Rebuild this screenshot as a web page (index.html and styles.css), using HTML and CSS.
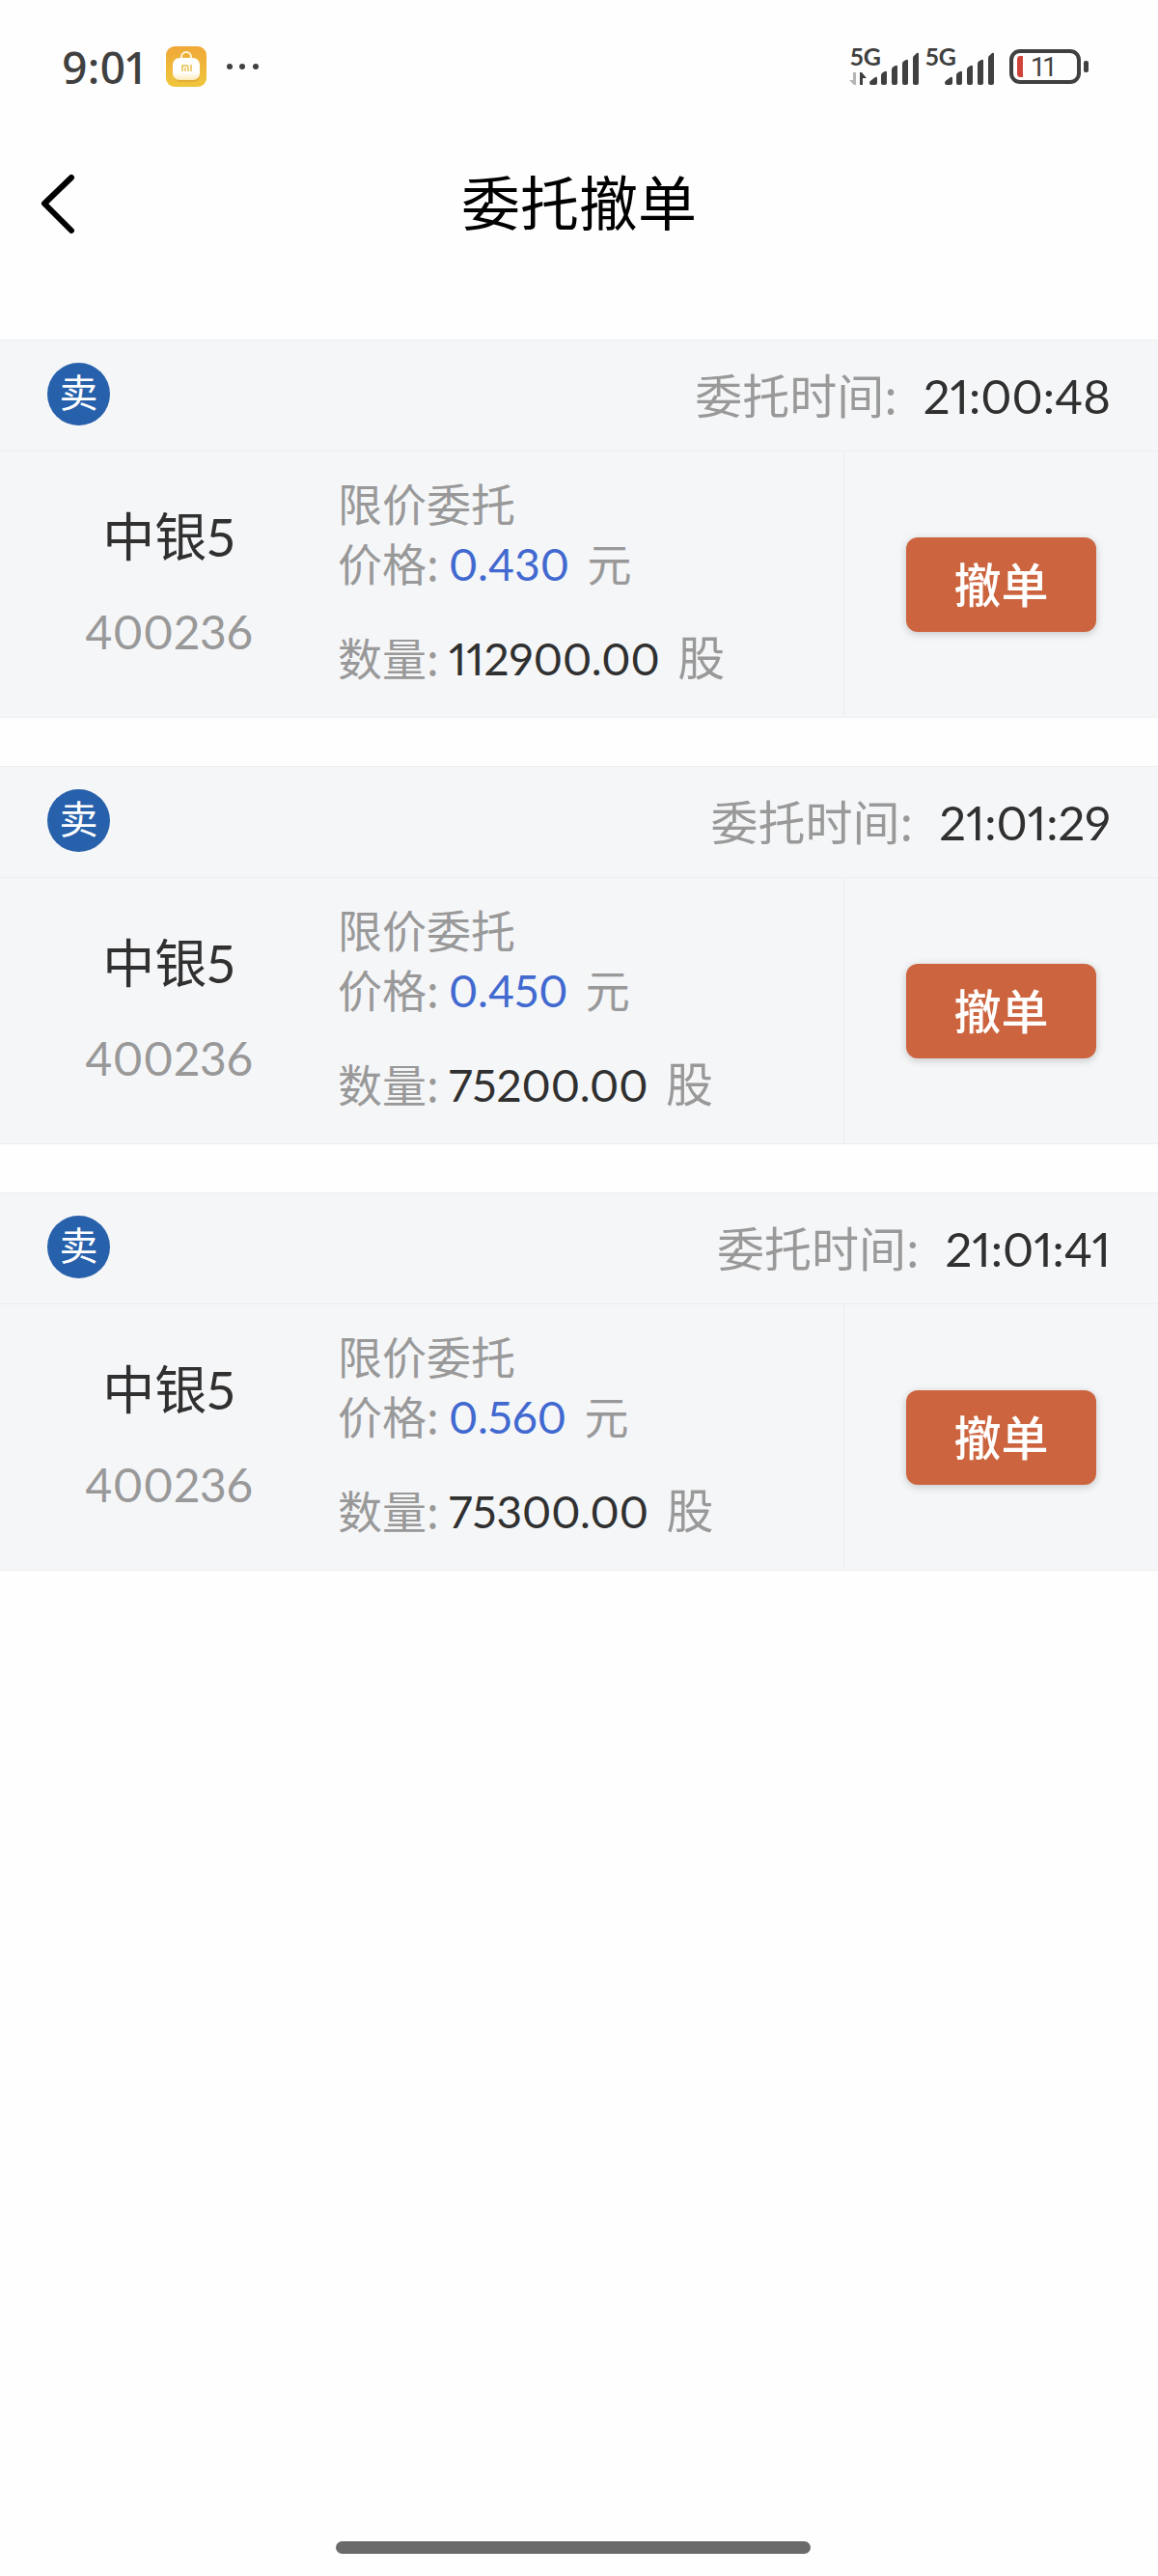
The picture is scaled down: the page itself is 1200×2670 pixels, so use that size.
FILE: index.html
```html
<!DOCTYPE html>
<html lang="zh-CN">
<head>
  <meta charset="UTF-8">
  <meta name="viewport" content="width=device-width, initial-scale=1.0">
  <title>委托撤单</title>
  <link rel="stylesheet" href="styles.css">
</head>
<body>
  <div class="status-bar">
    <div class="status-left">
      <span class="clock">9:01</span>
      <svg class="app-icon" width="42" height="42" viewBox="0 0 42 42" aria-hidden="true">
        <defs>
          <linearGradient id="appBg" x1="0" y1="0" x2="0" y2="1">
            <stop offset="0" stop-color="#f0a838"/>
            <stop offset="1" stop-color="#efc63c"/>
          </linearGradient>
          <linearGradient id="bagBg" x1="0" y1="0" x2="0" y2="1">
            <stop offset="0.65" stop-color="#fff"/>
            <stop offset="1" stop-color="#fbeab8"/>
          </linearGradient>
        </defs>
        <rect width="42" height="42" rx="9" fill="url(#appBg)"/>
        <path d="M16 13v-2a5 5 0 0 1 10 0v2" fill="none" stroke="#fff6da" stroke-width="2"/>
        <rect x="8" y="14" width="27" height="23" rx="7" fill="#d39a28" opacity="0.5"/>
        <rect x="7" y="12" width="28" height="23" rx="7" fill="url(#bagBg)"/>
        <path d="M17 26v-6h4a2 2 0 0 1 2 2v4M20 22v4M26 19v7" fill="none" stroke="#e6c04a" stroke-width="1.5"/>
      </svg>
      <svg width="34" height="8" viewBox="0 0 34 8" aria-hidden="true">
        <circle cx="4" cy="4" r="3" fill="#404040"/>
        <circle cx="17" cy="4" r="3" fill="#404040"/>
        <circle cx="31" cy="4" r="3" fill="#404040"/>
      </svg>
    </div>
    <div class="status-right">
      <svg width="74" height="60" viewBox="0 -10 74 60" fill="#404040" aria-label="5G">
        <text class="net" x="1" y="19">5G</text>
        <path d="M4 26h3v13H5L0 34h4z" fill="#b5b5b5"/>
        <path d="M11 39V26h2l5 6h-4v7z"/>
        <path d="M21 37q0-2 2-3l4-3q2-1 2 1v5q0 2-2 2h-4q-2 0-2-2z"/>
        <path d="M33 29q0-2 2-3l2-1q2-1 2 1v11q0 2-2 2h-2q-2 0-2-2z"/>
        <path d="M44 23q0-2 2-3l2-1q2-1 2 1v17q0 2-2 2h-2q-2 0-2-2z"/>
        <path d="M55 17q0-2 2-3l2-1q2-1 2 1v23q0 2-2 2h-2q-2 0-2-2z"/>
        <path d="M66 11q0-2 2-3l2-2q2-1 2 1v30q0 2-2 2h-2q-2 0-2-2z"/>
      </svg>
      <svg width="74" height="60" viewBox="0 -10 74 60" fill="#404040" aria-label="5G">
        <text class="net" x="1" y="19">5G</text>
        <path d="M21 37q0-2 2-3l4-3q2-1 2 1v5q0 2-2 2h-4q-2 0-2-2z"/>
        <path d="M33 29q0-2 2-3l2-1q2-1 2 1v11q0 2-2 2h-2q-2 0-2-2z"/>
        <path d="M44 23q0-2 2-3l2-1q2-1 2 1v17q0 2-2 2h-2q-2 0-2-2z"/>
        <path d="M55 17q0-2 2-3l2-1q2-1 2 1v23q0 2-2 2h-2q-2 0-2-2z"/>
        <path d="M66 11q0-2 2-3l2-2q2-1 2 1v30q0 2-2 2h-2q-2 0-2-2z"/>
      </svg>
      <svg class="battery" width="82" height="36" viewBox="0 0 82 36" aria-label="11%">
        <rect x="2" y="2" width="70" height="32" rx="9" fill="none" stroke="#404040" stroke-width="4"/>
        <path d="M11 7h3v22h-3q-3 0-3-4V11q0-4 3-4z" fill="#d0433a"/>
        <rect x="77" y="12" width="5" height="12" rx="2" fill="#404040"/>
        <text class="level" x="23" y="28">11</text>
      </svg>
    </div>
  </div>

  <header class="nav">
    <a class="back" href="#" aria-label="返回">
      <svg width="38" height="64" viewBox="0 0 38 64" aria-hidden="true">
        <path d="M33 5L5 32l28 28" fill="none" stroke="#000" stroke-width="6" stroke-linecap="round" stroke-linejoin="round"/>
      </svg>
    </a>
    <h1>委托撤单</h1>
  </header>

  <main class="orders">
    <article class="order">
      <div class="order-head">
        <span class="badge">卖</span>
        <p class="time">委托时间: <span class="num">21:00:48</span></p>
      </div>
      <div class="order-body">
        <div class="stock">
          <h2>中银5</h2>
          <p>400236</p>
        </div>
        <div class="detail">
          <p>限价委托</p>
          <p>价格: <span class="num price">0.430</span> 元</p>
          <p class="amount">数量: <span class="num">112900.00</span> <span class="unit">股</span></p>
        </div>
        <div class="action">
          <button type="button">撤单</button>
        </div>
      </div>
    </article>

    <article class="order">
      <div class="order-head">
        <span class="badge">卖</span>
        <p class="time">委托时间: <span class="num">21:01:29</span></p>
      </div>
      <div class="order-body">
        <div class="stock">
          <h2>中银5</h2>
          <p>400236</p>
        </div>
        <div class="detail">
          <p>限价委托</p>
          <p>价格: <span class="num price">0.450</span> 元</p>
          <p class="amount">数量: <span class="num">75200.00</span> <span class="unit">股</span></p>
        </div>
        <div class="action">
          <button type="button">撤单</button>
        </div>
      </div>
    </article>

    <article class="order">
      <div class="order-head">
        <span class="badge">卖</span>
        <p class="time">委托时间: <span class="num">21:01:41</span></p>
      </div>
      <div class="order-body">
        <div class="stock">
          <h2>中银5</h2>
          <p>400236</p>
        </div>
        <div class="detail">
          <p>限价委托</p>
          <p>价格: <span class="num price">0.560</span> 元</p>
          <p class="amount">数量: <span class="num">75300.00</span> <span class="unit">股</span></p>
        </div>
        <div class="action">
          <button type="button">撤单</button>
        </div>
      </div>
    </article>
  </main>

  <div class="home-bar"></div>
</body>
</html>
```
FILE: styles.css
```css
* {
  box-sizing: border-box;
}
body {
  margin: 0;
  min-height: 100vh;
  display: flex;
  flex-direction: column;
  background-color: #fefefe;
  color: #303030;
  font-family: Lato, "Noto Sans CJK SC", sans-serif;
  font-variant-numeric: proportional-nums;
}
h1, h2, p {
  margin: 0;
  font-weight: normal;
}

/* 状态栏 */
.status-bar {
  display: flex;
  justify-content: space-between;
  align-items: center;
  height: 138px;
  padding: 0 72px 0 64px;
}
.status-left, .status-right {
  display: flex;
  align-items: center;
}
.status-left {
  gap: 20px;
}
.status-right {
  gap: 4px;
}
.clock {
  font-family: "Noto Sans", sans-serif;
  font-size: 46px;
  font-weight: 500;
  line-height: 60px;
  color: #404040;
}
.net {
  font-family: Lato, sans-serif;
  font-size: 25px;
  font-weight: bold;
}
.battery {
  margin-left: 10px;
}
.level {
  font-family: Roboto, sans-serif;
  font-size: 28px;
  fill: #404040;
}

/* 标题栏 */
.nav {
  position: relative;
  display: flex;
  justify-content: center;
  align-items: center;
  height: 146px;
}
.nav h1 {
  font-size: 61px;
  line-height: 80px;
  color: #000;
}
.back {
  position: absolute;
  left: 41px;
  display: flex;
}

/* 委托列表 */
.orders {
  flex: 1;
  display: flex;
  flex-direction: column;
  gap: 50px;
  padding-top: 68px;
}
.order {
  background-color: #f5f6f8;
  border: solid #eceef0;
  border-width: 1px 0;
}
.order-head {
  display: flex;
  justify-content: space-between;
  align-items: center;
  height: 114px;
  padding: 0 49px 3px;
}
.badge {
  width: 65px;
  height: 65px;
  border-radius: 50%;
  background-color: #2760ab;
  color: #fff;
  font-size: 40px;
  line-height: 62px;
  text-align: center;
}
.time {
  font-family: "Noto Sans CJK SC", sans-serif;
  font-size: 49px;
  line-height: 64px;
  color: #999;
}
.num {
  font-family: Lato, sans-serif;
  color: #303030;
}
.time .num {
  margin-left: 16px;
}
.order-body {
  display: grid;
  grid-template-columns: 14fr 21fr 13fr;
  height: 276px;
  border-top: 1px solid #eceef0;
}
.stock {
  display: flex;
  flex-direction: column;
  justify-content: center;
  text-align: center;
  font-size: 48px;
  line-height: 98px;
}
.stock h2 {
  font-size: 54px;
}
.stock p {
  color: #999;
}
.detail {
  padding-top: 21px;
  border-right: 1px solid #eceef0;
  font-family: "Noto Sans CJK SC", sans-serif;
  font-size: 46px;
  line-height: 62px;
  color: #999;
}
.detail .num {
  margin-right: 8px;
}
.detail .price {
  color: #4169d0;
}
.amount {
  margin-top: 32px;
}
.unit {
  font-size: 49px;
}
.action {
  display: flex;
  justify-content: center;
  align-items: center;
}
.action button {
  padding: 0 49px;
  border: none;
  border-radius: 12px;
  background-color: #cc653f;
  box-shadow: 0 2px 8px rgba(0,0,0,0.2);
  color: #fff;
  font-family: inherit;
  font-size: 49px;
  font-weight: 500;
  line-height: 98px;
  cursor: pointer;
}

.home-bar {
  width: 41%;
  height: 13px;
  margin: 0 0 23px 29%;
  border-radius: 7px;
  background-color: #6a6a6a;
}
```
